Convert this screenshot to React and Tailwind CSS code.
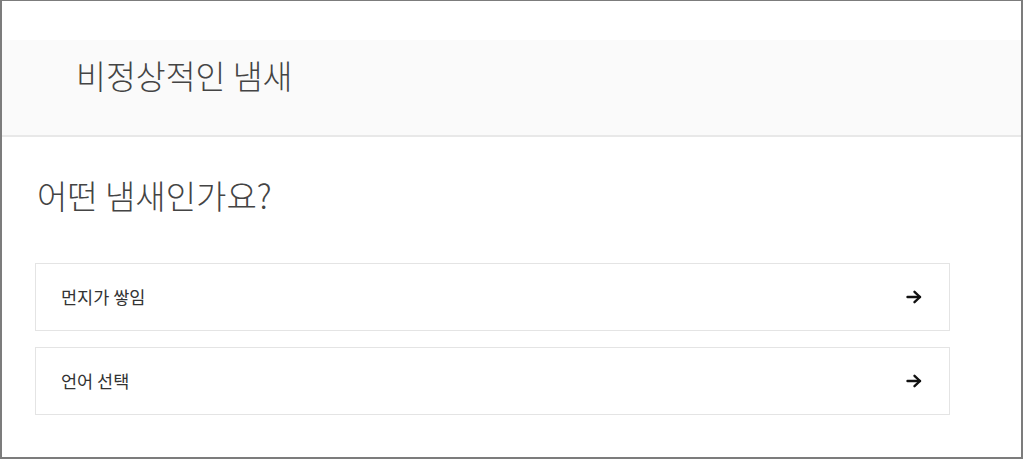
import React from "react";

function Arrow() {
  return (
    <svg width="16" height="14" viewBox="0 0 16 14" fill="none" stroke="#111" strokeWidth="2.4" strokeLinecap="round" strokeLinejoin="round">
      <path d="M1.5 7h12.5" />
      <path d="M8.5 1.8L14 7l-5.5 5.2" />
    </svg>
  );
}

function Option({ label }) {
  return (
    <div className="flex h-[68px] w-[915px] items-center justify-between border border-[#e4e4e4] bg-white pl-[25px] pr-[27px]">
      <span className="text-[17.5px] text-[#333]">{label}</span>
      <Arrow />
    </div>
  );
}

export default function App() {
  return (
    <div
      className="h-[459px] w-[1023px] border-t border-l-2 border-r-2 border-b-2 border-[#7c7c7c] bg-white"
      style={{ fontFamily: '"Noto Sans CJK KR", "Noto Sans", sans-serif' }}
    >
      <div className="h-[39px]" />
      <div className="h-[97px] border-b-2 border-[#e8e8e8] bg-[#fafafa] pl-[74px] pt-[19px]">
        <h1 className="text-[32.5px] font-light leading-none text-[#444]">비정상적인 냄새</h1>
      </div>
      <div className="pl-[33px]">
        <h2 className="mt-[42px] pl-[2px] text-[33px] font-light leading-none text-[#444]">어떤 냄새인가요?</h2>
        <div className="mt-[51px] flex flex-col gap-[16px]">
          <Option label="먼지가 쌓임" />
          <Option label="언어 선택" />
        </div>
      </div>
    </div>
  );
}
